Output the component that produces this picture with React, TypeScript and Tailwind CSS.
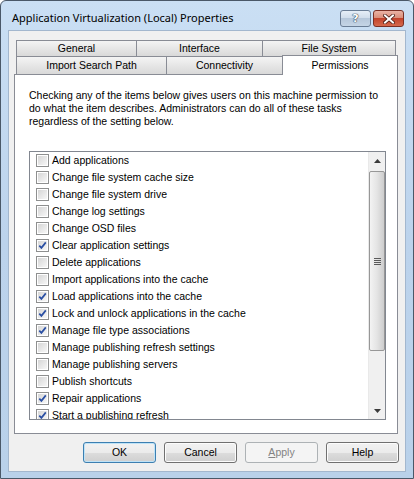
import React from "react";

const items: [string, boolean][] = [
  ["Add applications", false],
  ["Change file system cache size", false],
  ["Change file system drive", false],
  ["Change log settings", false],
  ["Change OSD files", false],
  ["Clear application settings", true],
  ["Delete applications", false],
  ["Import applications into the cache", false],
  ["Load applications into the cache", true],
  ["Lock and unlock applications in the cache", true],
  ["Manage file type associations", true],
  ["Manage publishing refresh settings", false],
  ["Manage publishing servers", false],
  ["Publish shortcuts", false],
  ["Repair applications", true],
  ["Start a publishing refresh", true],
];

function CheckBox({ on }: { on: boolean }) {
  return (
    <span className="w-[13px] h-[13px] shrink-0 border border-[#8e8f8f] bg-white p-px">
      <span className="relative block w-full h-full bg-gradient-to-br from-[#d6d6d6] to-[#f7f7f7]">
        {on && (
          <svg width="9" height="9" viewBox="0 0 9 9" className="absolute left-0 top-0">
            <path d="M1.3 4.6 L3.4 6.9 L7.8 1.4" fill="none" stroke="#2a4fa3" strokeWidth="1.7" />
          </svg>
        )}
      </span>
    </span>
  );
}

function Tab({ label, w, first }: { label: string; w: string; first?: boolean }) {
  return (
    <div
      className={`${w} ${first ? "" : "-ml-px"} h-full flex items-center justify-center border-t border-x border-[#898c95] bg-gradient-to-b from-[#f4f4f4] to-[#d9d9d9] leading-none`}
    >
      {label}
    </div>
  );
}

function Button({ children, kind }: { children: React.ReactNode; kind?: "default" | "disabled" }) {
  if (kind === "disabled")
    return (
      <div className="w-[73px] h-[21px] rounded-[3px] border border-[#adb2b5] bg-[#f4f4f4] text-[#838383] flex items-center justify-center">
        {children}
      </div>
    );
  return (
    <div
      className={`w-[73px] h-[21px] rounded-[3px] border ${
        kind === "default"
          ? "border-[#3c7fb1] shadow-[inset_0_0_0_1px_#bfe3f7]"
          : "border-[#707070] shadow-[inset_0_0_0_1px_#fcfcfc]"
      } bg-[linear-gradient(#f2f2f2,#ebebeb_50%,#dddddd_50%,#cfcfcf)] flex items-center justify-center`}
    >
      {children}
    </div>
  );
}

export default function App() {
  return (
    <div className="w-[414px] h-[479px] bg-white font-['Liberation_Sans',Arial,sans-serif] text-[10.5px] text-black">
      <div className="w-full h-full flex flex-col rounded-t-[6px] border border-[#4a5868] bg-gradient-to-b from-[#cadff4] via-[#bcd3ec] to-[#b9d1ea] px-[7px] pb-[6px]">
        {/* Title bar */}
        <div className="h-[29px] shrink-0 -mx-[7px] pl-[11px] pr-[9px] pt-[6px] flex items-center">
          <span className="flex-1 font-['Noto_Sans',sans-serif] text-[11px] text-black whitespace-nowrap">
            Application Virtualization (Local) Properties
          </span>
          <div className="flex gap-[2px]">
            <div className="w-[31px] h-[17px] rounded-[3px] border border-[#6a7d95] bg-[linear-gradient(#e6eef7,#cfdcea_50%,#b6c7da_50%,#c5d5e6)] flex items-center justify-center">
              <span className="font-['DejaVu_Sans',sans-serif] font-bold text-[11px] leading-none text-white [text-shadow:0_0_1px_#2d3f55,0_0_1px_#2d3f55,0_0_1px_#2d3f55]">
                ?
              </span>
            </div>
            <div className="w-[31px] h-[17px] rounded-[3px] border border-[#7a2f24] bg-[linear-gradient(#eab3a5,#d88a76_50%,#c2432c_50%,#d66a4d)] flex items-center justify-center">
              <svg width="12" height="10" viewBox="0 0 12 10">
                <path d="M2 1.5 L10 8.5 M10 1.5 L2 8.5" stroke="#4a1a12" strokeWidth="3.6" strokeLinecap="square" />
                <path d="M2 1.5 L10 8.5 M10 1.5 L2 8.5" stroke="#ffffff" strokeWidth="2" strokeLinecap="square" />
              </svg>
            </div>
          </div>
        </div>

        {/* Client area */}
        <div className="h-[442px] shrink-0 border border-[#a3b7ce] bg-[#f0f0f0] pt-[9px] pl-[5px] pr-[7px] flex flex-col">
          {/* Tab rows */}
          <div className="flex h-[16px] pl-[2px]">
            <Tab label="General" w="w-[121px]" first />
            <Tab label="Interface" w="w-[127px]" />
            <Tab label="File System" w="w-[134px]" />
          </div>
          <div className="flex items-end h-[18px] pl-[2px]">
            <Tab label="Import Search Path" w="w-[151px]" first />
            <Tab label="Connectivity" w="w-[117px]" />
            <div className="-ml-px w-[116px] h-[20px] -mb-px relative z-10 border-t border-x border-[#898c95] bg-white flex justify-center pt-[4px] leading-none">
              Permissions
            </div>
          </div>

          {/* Panel */}
          <div className="h-[360px] shrink-0 border border-[#898c95] bg-white pl-[14px] pt-[14px] flex flex-col">
            <p className="leading-[13px] whitespace-nowrap">
              Checking any of the items below gives users on this machine permission to
              <br />
              do what the item describes. Administrators can do all of these tasks
              <br />
              regardless of the setting below.
            </p>

            <div className="mt-[23px] w-[357px] h-[269px] border border-[#828790] flex">
              <div className="flex-1 overflow-hidden">
                {items.map(([label, on]) => (
                  <div key={label} className="h-[17px] flex items-center pl-[6px] gap-[3px] whitespace-nowrap">
                    <CheckBox on={on} />
                    <span>{label}</span>
                  </div>
                ))}
              </div>

              {/* Scrollbar */}
              <div className="w-[17px] shrink-0 flex flex-col bg-[#f0f0f0] border-l border-[#e9e9e9]">
                <div className="h-[18px] flex items-center justify-center">
                  <svg width="7" height="4" viewBox="0 0 7 4">
                    <path d="M0 4 L3.5 0 L7 4 Z" fill="#3a3a3a" />
                  </svg>
                </div>
                <div className="mt-px h-[180px] rounded-[2px] border border-[#979797] bg-gradient-to-r from-[#f3f3f3] via-[#e4e4e4] to-[#cdcdcd] flex flex-col items-center justify-center gap-[1px]">
                  {[0, 1, 2, 3].map((i) => (
                    <span key={i} className="block w-[7px] h-px bg-[#5a5a5a]" />
                  ))}
                </div>
                <div className="flex-1" />
                <div className="h-[17px] flex items-center justify-center">
                  <svg width="7" height="4" viewBox="0 0 7 4">
                    <path d="M0 0 L7 0 L3.5 4 Z" fill="#3a3a3a" />
                  </svg>
                </div>
              </div>
            </div>
          </div>

          {/* Buttons */}
          <div className="flex justify-end gap-[8px] mt-[8px] -mr-px">
            <Button kind="default">OK</Button>
            <Button>Cancel</Button>
            <Button kind="disabled">
              <span>
                <span className="underline">A</span>pply
              </span>
            </Button>
            <Button>Help</Button>
          </div>
        </div>
      </div>
    </div>
  );
}
